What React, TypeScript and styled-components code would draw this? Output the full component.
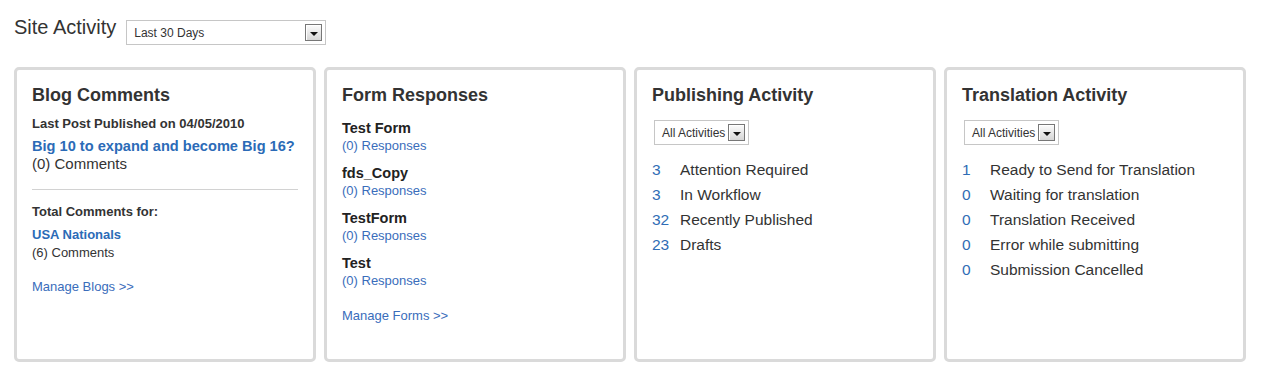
import React from 'react';
import styled, {createGlobalStyle} from 'styled-components';

const GlobalStyle = createGlobalStyle`
    body {
        margin: 0;
        background: #fff;
        font-family: 'Liberation Sans', Arial, sans-serif;
        color: #333;
    }
`;

const Page = styled.div`
    padding: 17px 14px 0;
    width: 1261px;
    box-sizing: border-box;
`;

const Header = styled.div`
    display: flex;
    align-items: flex-start;
    gap: 10px;
    height: 28px;
`;

const PageTitle = styled.h1`
    margin: 0;
    font-size: 20px;
    font-weight: normal;
    line-height: 20px;
    color: #333;
`;

const Select = styled.div<{$width?: number; $mt?: number; $ml?: number}>`
    display: flex;
    align-items: center;
    justify-content: space-between;
    gap: 3px;
    box-sizing: border-box;
    width: ${p => (p.$width ? `${p.$width}px` : 'max-content')};
    height: 25px;
    margin-top: ${p => p.$mt || 0}px;
    margin-left: ${p => p.$ml || 0}px;
    padding: 0 3px 0 7px;
    border: 1px solid #c6c6c6;
    background: #fff;
    font-size: 12px;
    color: #333;
`;

const ArrowButton = styled.span`
    display: flex;
    align-items: center;
    justify-content: center;
    box-sizing: border-box;
    width: 17px;
    height: 17px;
    border: 1px solid #777;
    background: linear-gradient(#fbfbfb, #d6d6d6);
    box-shadow: inset 1px 1px 0 #fff;

    &::after {
        content: '';
        margin-top: 2px;
        border-left: 4px solid transparent;
        border-right: 4px solid transparent;
        border-top: 4px solid #111;
    }
`;

const Panels = styled.div`
    display: flex;
    gap: 8px;
    margin-top: 22px;
`;

const Panel = styled.section`
    box-sizing: border-box;
    width: 302px;
    height: 295px;
    padding: 14px 15px;
    border: 3px solid #dadada;
    border-radius: 5px;
    background: #fff;
`;

const PanelTitle = styled.h2`
    margin: 0;
    font-size: 18px;
    font-weight: bold;
    line-height: 22px;
    color: #333;
`;

const Subhead = styled.div<{$mt: number}>`
    margin-top: ${p => p.$mt}px;
    font-size: 13px;
    font-weight: bold;
    line-height: 18px;
    color: #333;
`;

const PostLink = styled.a<{$size: number; $mt: number}>`
    display: block;
    margin-top: ${p => p.$mt}px;
    font-size: ${p => p.$size}px;
    font-weight: bold;
    line-height: 18px;
    white-space: nowrap;
    color: #2b6bb7;
    text-decoration: none;
`;

const CommentCount = styled.div<{$size: number}>`
    font-size: ${p => p.$size}px;
    line-height: 18px;
    color: #333;
`;

const Divider = styled.hr`
    margin: 16px 0 0;
    border: 0;
    border-top: 1px solid #d2d2d2;
`;

const ManageLink = styled.a<{$mt: number}>`
    display: block;
    margin-top: ${p => p.$mt}px;
    font-size: 13px;
    line-height: 18px;
    color: #3a6dbb;
    text-decoration: none;
`;

const FormList = styled.div`
    display: flex;
    flex-direction: column;
    gap: 9px;
    margin-top: 13px;
`;

const FormName = styled.div`
    font-size: 14.5px;
    font-weight: bold;
    line-height: 18px;
    color: #222;
`;

const FormResponses = styled.a`
    display: block;
    font-size: 13px;
    line-height: 18px;
    color: #3a6dbb;
    text-decoration: none;
`;

const StatList = styled.div`
    margin-top: 12px;
`;

const StatRow = styled.div`
    display: flex;
    font-size: 15.5px;
    line-height: 25px;
    color: #333;
`;

const StatNum = styled.span`
    width: 28px;
    flex: none;
    color: #2f6db5;
`;

type Stat = {count: number; label: string};

const publishing: Stat[] = [
    {count: 3, label: 'Attention Required'},
    {count: 3, label: 'In Workflow'},
    {count: 32, label: 'Recently Published'},
    {count: 23, label: 'Drafts'},
];

const translation: Stat[] = [
    {count: 1, label: 'Ready to Send for Translation'},
    {count: 0, label: 'Waiting for translation'},
    {count: 0, label: 'Translation Received'},
    {count: 0, label: 'Error while submitting'},
    {count: 0, label: 'Submission Cancelled'},
];

const forms = ['Test Form', 'fds_Copy', 'TestForm', 'Test'];

function Dropdown({label, width, mt, ml}: {label: string; width?: number; mt?: number; ml?: number}) {
    return (
        <Select
            $width={width}
            $mt={mt}
            $ml={ml}
        >
            <span>{label}</span>
            <ArrowButton/>
        </Select>
    );
}

function ActivityPanel({title, stats}: {title: string; stats: Stat[]}) {
    return (
        <Panel>
            <PanelTitle>{title}</PanelTitle>
            <Dropdown
                label='All Activities'
                mt={14}
                ml={2}
            />
            <StatList>
                {stats.map((s) => (
                    <StatRow key={s.label}>
                        <StatNum>{s.count}</StatNum>
                        <span>{s.label}</span>
                    </StatRow>
                ))}
            </StatList>
        </Panel>
    );
}

export default function App() {
    return (
        <Page>
            <GlobalStyle/>
            <Header>
                <PageTitle>{'Site Activity'}</PageTitle>
                <Dropdown
                    label='Last 30 Days'
                    width={200}
                    mt={3}
                />
            </Header>
            <Panels>
                <Panel>
                    <PanelTitle>{'Blog Comments'}</PanelTitle>
                    <Subhead $mt={9}>{'Last Post Published on 04/05/2010'}</Subhead>
                    <PostLink
                        href='#'
                        $size={14.6}
                        $mt={4}
                    >
                        {'Big 10 to expand and become Big 16?'}
                    </PostLink>
                    <CommentCount $size={15}>{'(0) Comments'}</CommentCount>
                    <Divider/>
                    <Subhead $mt={13}>{'Total Comments for:'}</Subhead>
                    <PostLink
                        href='#'
                        $size={13}
                        $mt={5}
                    >
                        {'USA Nationals'}
                    </PostLink>
                    <CommentCount $size={13}>{'(6) Comments'}</CommentCount>
                    <ManageLink
                        href='#'
                        $mt={16}
                    >
                        {'Manage Blogs >>'}
                    </ManageLink>
                </Panel>
                <Panel>
                    <PanelTitle>{'Form Responses'}</PanelTitle>
                    <FormList>
                        {forms.map((f) => (
                            <div key={f}>
                                <FormName>{f}</FormName>
                                <FormResponses href='#'>{'(0) Responses'}</FormResponses>
                            </div>
                        ))}
                    </FormList>
                    <ManageLink
                        href='#'
                        $mt={17}
                    >
                        {'Manage Forms >>'}
                    </ManageLink>
                </Panel>
                <ActivityPanel
                    title='Publishing Activity'
                    stats={publishing}
                />
                <ActivityPanel
                    title='Translation Activity'
                    stats={translation}
                />
            </Panels>
        </Page>
    );
}
